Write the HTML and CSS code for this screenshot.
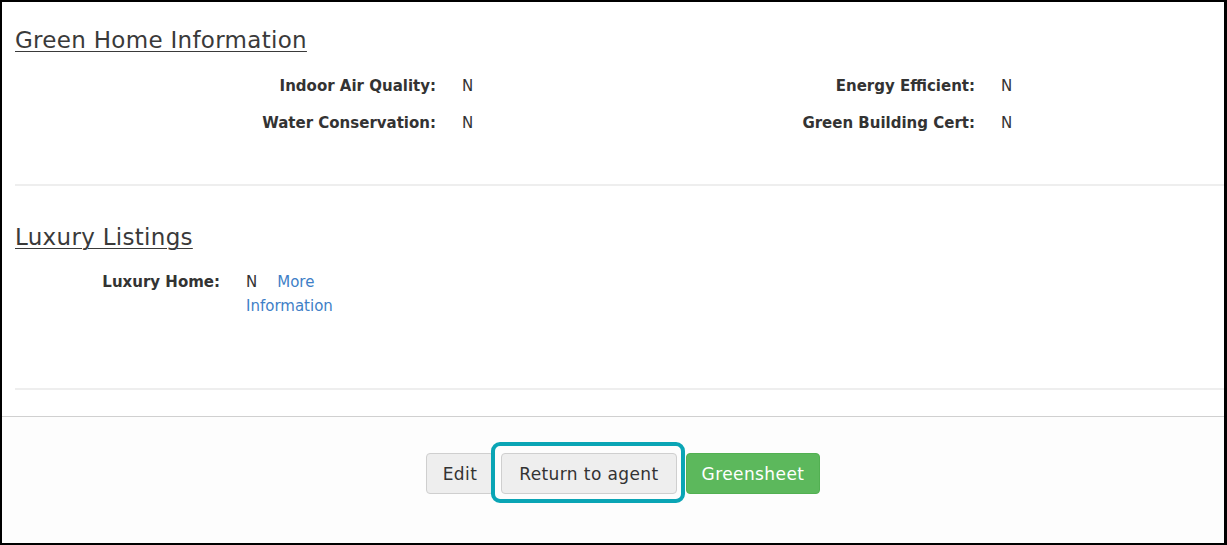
FILE: index.html
```html
<!DOCTYPE html>
<html lang="en">
<head>
<meta charset="utf-8">
<title>Listing details</title>
<link rel="stylesheet" href="styles.css">
</head>
<body>
<div class="frame">
  <div class="content">
    <section class="section green">
      <h2 class="section-title">Green Home Information</h2>
      <div class="grid four">
        <div class="label">Indoor Air Quality:</div>
        <div class="value">N</div>
        <div class="label">Energy Efficient:</div>
        <div class="value">N</div>
        <div class="label">Water Conservation:</div>
        <div class="value">N</div>
        <div class="label">Green Building Cert:</div>
        <div class="value">N</div>
      </div>
    </section>
    <hr class="divider">
    <section class="section luxury">
      <h2 class="section-title">Luxury Listings</h2>
      <div class="grid two">
        <div class="label">Luxury Home:</div>
        <div class="value"><span class="n">N</span><a href="#" class="link">More Information</a></div>
      </div>
    </section>
    <hr class="divider">
  </div>
  <div class="footer">
    <button class="btn btn-default">Edit</button>
    <span class="highlight-wrap">
      <button class="btn btn-default btn-return">Return to agent</button>
      <span class="highlight"></span>
    </span>
    <button class="btn btn-success">Greensheet</button>
  </div>
</div>
</body>
</html>
```

FILE: styles.css
```css
* { box-sizing: border-box; }
html, body { margin: 0; padding: 0; background: #fff; }
body {
  font-family: "DejaVu Sans", "Open Sans", sans-serif;
  color: #333;
}
.frame {
  width: 1227px;
  height: 545px;
  border: 2px solid #000;
  border-right-width: 3px;
  display: flex;
  flex-direction: column;
  overflow: hidden;
}
.content {
  padding: 0 0 0 13px;
  background: #fff;
}
.section-title {
  margin: 0;
  font-weight: normal;
  font-size: 23px;
  letter-spacing: 0.3px;
  color: #3a3a3a;
  text-decoration: underline;
  text-decoration-thickness: 1px;
  text-underline-offset: 3px;
  line-height: 28px;
}
.green { padding: 24px 0 51px; }
.luxury { padding: 37px 0 70px; }
.grid {
  display: grid;
  column-gap: 26px;
  font-size: 15px;
  line-height: 20px;
  align-content: start;
}
.grid.four {
  grid-template-columns: 421px 150px 337px 1fr;
  row-gap: 17px;
  margin-top: 22px;
}
.grid.two {
  grid-template-columns: 205px 108px;
  margin-top: 19px;
  line-height: 24px;
}
.label {
  text-align: right;
  font-weight: bold;
  color: #333;
}
.value { color: #333; }
.n { margin-right: 20px; }
.link { color: #3f7fc7; text-decoration: none; }
.divider {
  border: 0;
  border-top: 2px solid #eeeeee;
  margin: 0;
}
.footer {
  flex: 1;
  margin-top: 26px;
  border-top: 1px solid #d0d0d0;
  background: #fdfdfd;
  display: flex;
  justify-content: center;
  align-items: flex-start;
  padding-top: 36px;
  padding-left: 20px;
}
.btn {
  font-family: inherit;
  font-size: 17px;
  height: 41px;
  padding: 0 16px;
  border-radius: 4px;
  border: 1px solid #cfcfcf;
  letter-spacing: 0.4px;
  cursor: pointer;
}
.btn-default { background: #eeeeee; color: #333; }
.btn-return { padding: 0 17px; }
.btn-success { background: #5cb85c; border-color: #52b052; color: #fff; margin-left: 9px; padding: 0 15px; }
.highlight-wrap { position: relative; margin-left: 7px; display: inline-flex; }
.highlight {
  position: absolute;
  top: -11px; bottom: -9px; left: -10px; right: -8px;
  border: 4px solid #0aa5b5;
  border-radius: 9px;
  pointer-events: none;
}
```
